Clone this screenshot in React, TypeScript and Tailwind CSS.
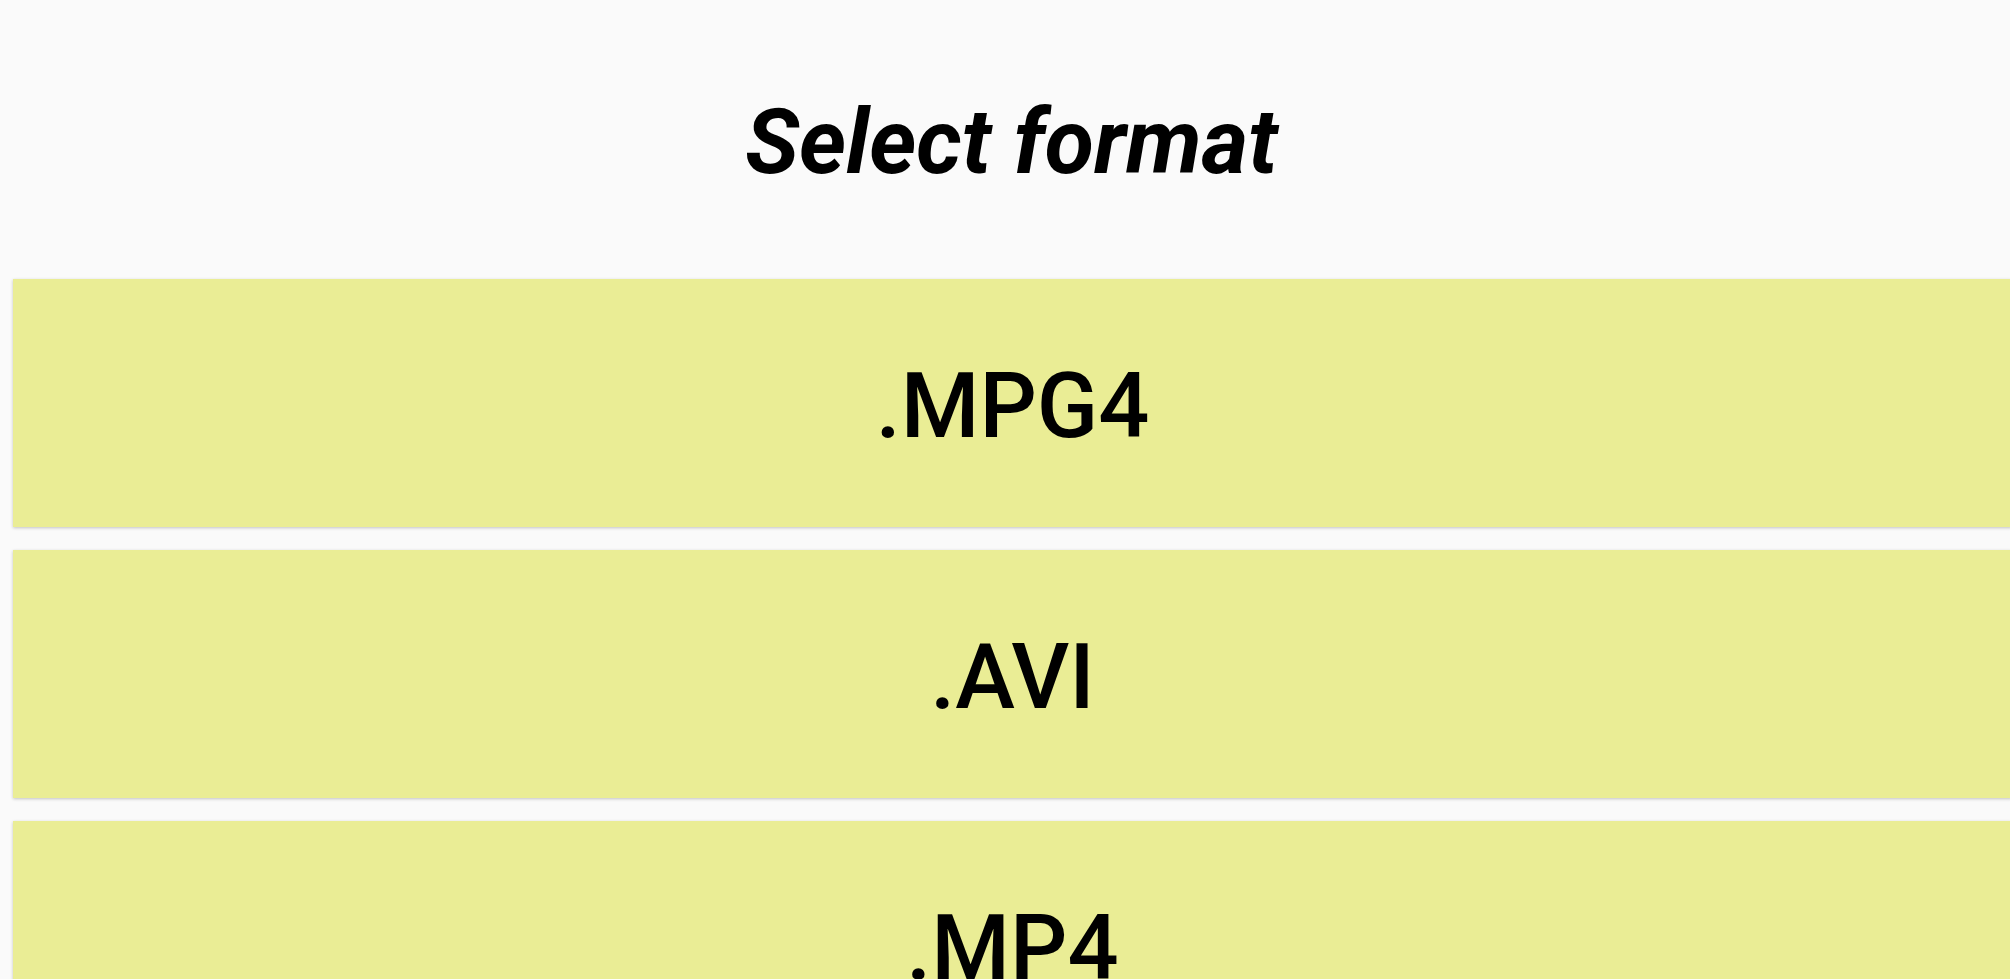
const formats = [".MPG4", ".AVI", ".MP4"];

export default function App() {
  return (
    <div
      className="h-screen w-full overflow-hidden bg-[#fafafa]"
      style={{ fontFamily: "Roboto, 'Noto Sans', sans-serif" }}
    >
      <div className="w-[2010px] pl-[13px]">
        <h1 className="pt-[98px] pb-[91px] text-center text-[90px] font-bold italic leading-none text-black">
          Select format
        </h1>
        <div className="flex flex-col gap-[23px]">
          {formats.map((f) => (
            <button
              key={f}
              className="flex h-[248px] w-[1999px] shrink-0 items-center justify-center bg-[#eaed95] pt-2 text-[90px] font-medium leading-none text-black shadow-[0_1px_3px_rgba(0,0,0,0.22)]"
            >
              {f}
            </button>
          ))}
        </div>
      </div>
    </div>
  );
}
